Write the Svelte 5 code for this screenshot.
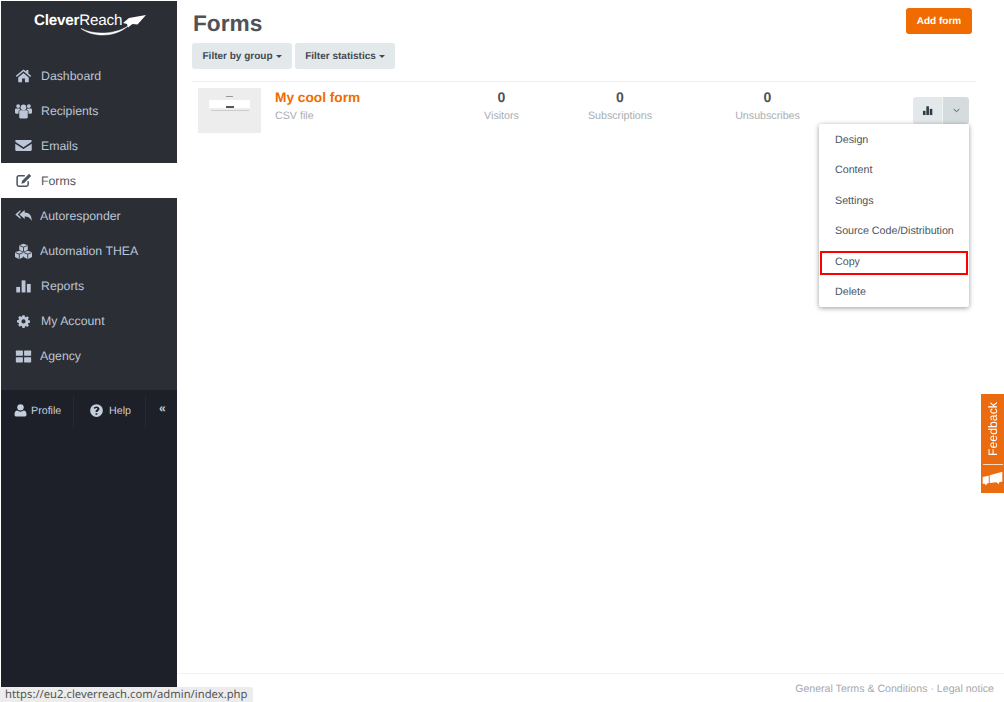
<script>
  const nav = [
    { label: 'Dashboard', icon: 'home' },
    { label: 'Recipients', icon: 'users' },
    { label: 'Emails', icon: 'mail' },
    { label: 'Forms', icon: 'edit', active: true },
    { label: 'Autoresponder', icon: 'replyall', tight: true },
    { label: 'Automation THEA', icon: 'cubes', tight: true },
    { label: 'Reports', icon: 'bars' },
    { label: 'My Account', icon: 'cog' },
    { label: 'Agency', icon: 'grid', tight: true }
  ];
  const stats = [
    { value: 0, label: 'Visitors', width: 119 },
    { value: 0, label: 'Subscriptions', width: 118 },
    { value: 0, label: 'Unsubscribes', width: 177 }
  ];
  const menu = ['Design', 'Content', 'Settings', 'Source Code/Distribution', 'Copy', 'Delete'];
</script>

{#snippet icon(name)}
  <svg class="icon" viewBox="0 0 20 20" aria-hidden="true">
    {#if name === 'home'}
      <path d="M10 2.800 1 10.400l1.100 1.300L10 5.100l7.900 6.600 1.100-1.300-3.300-2.800V3.400h-2.400v2z" />
      <path d="M3.800 12.400 10 7.200l6.200 5.200v5.400h-4.500v-4.200H8.300v4.200H3.800z" />
    {:else if name === 'users'}
      <circle cx="10" cy="6.200" r="3.400" />
      <circle cx="3.700" cy="4.800" r="2.300" />
      <circle cx="16.300" cy="4.800" r="2.300" />
      <path d="M5 11c0-1 .8-1.400 1.500-1.400h7c.7 0 1.500.4 1.500 1.400v7c0 .9-.7 1.400-1.500 1.400h-7c-.8 0-1.500-.5-1.500-1.400z" />
      <path d="M0 9c0-1 .6-1.500 1.400-1.500h4c.2.800.6 1.400 1.100 1.600-1.500.3-2.300 1-2.300 2v2.600H1.400c-.8 0-1.400-.5-1.400-1.300zM20 9c0-1-.6-1.500-1.400-1.500h-4c-.2.800-.6 1.400-1.100 1.600 1.500.3 2.300 1 2.300 2v2.600h2.800c.8 0 1.400-.5 1.400-1.300z" />
    {:else if name === 'mail'}
      <path d="M1.600 3.600h16.800c.7 0 1.300.5 1.300 1.200 0 .6-.4 1.100-.9 1.500L10 12 1 6.300C.5 5.900.3 5.400.3 4.800c0-.7.6-1.200 1.300-1.200z" />
      <path d="M.3 7.800 10 14l9.700-6.200v7.300c0 .8-.6 1.300-1.300 1.300H1.600c-.7 0-1.300-.5-1.300-1.300z" />
    {:else if name === 'edit'}
      <path class="line" d="M15.500 11v3.700c0 1.200-.8 2-2 2H4.500c-1.200 0-2-.8-2-2V6.500c0-1.200.8-2 2-2h7" />
      <path d="M16.600 2.200 19 4.600l-8.200 8.200-3.300.9.900-3.300z" />
    {:else if name === 'replyall'}
      <path d="M6.400 3.400v2.200L3.100 8.700l3.300 3.100V14L.3 8.700z" />
      <path d="M11.400 3.400v3.200c4.800.2 8.300 2.600 8.300 10-1.700-3.800-4.200-5.300-8.300-5.300V14L5.200 8.700z" />
    {:else if name === 'cubes'}
      <path d="m10 .8 5 1.900v5.400L10 10.200 5 8.100V2.700z" />
      <path d="m5 9 5 2v5.600L5 19 0 16.600V11zM15 9l5 2v5.600L15 19l-5-2.400V11z" />
      <path class="cut" d="M5.300 3 10 4.900 14.700 3M.4 11.300 5 13.100l4.600-1.800M10.400 11.300 15 13.100l4.600-1.800M5 13.100V19M15 13.100V19M10 4.900v5.300" />
    {:else if name === 'bars'}
      <rect x="1.500" y="10.500" width="4.500" height="6.500" />
      <rect x="7.800" y="2.800" width="4.500" height="14.200" />
      <rect x="14" y="7" width="4.500" height="10" />
    {:else if name === 'cog'}
      <g transform="translate(1.800 1.700) scale(0.82)">
        <path fill-rule="evenodd" d="M8.400 1h3.200l.4 2.300 1.500.6 1.900-1.300 2.300 2.300-1.300 1.900.6 1.500 2.300.4v3.200l-2.300.4-.6 1.500 1.300 1.900-2.300 2.300-1.900-1.300-1.500.6-.4 2.300H8.400L8 16.800l-1.500-.6-1.900 1.300-2.300-2.300 1.300-1.900-.6-1.500-2.300-.4V8.200L3 7.800l.6-1.500-1.300-1.900 2.300-2.300 1.900 1.300L8 2.800zM10 7a3 3 0 1 0 0 6 3 3 0 0 0 0-6z" />
      </g>
    {:else if name === 'grid'}
      <rect x="1" y="3" width="8.300" height="6.200" rx="0.800" />
      <rect x="10.700" y="3" width="8.300" height="6.200" rx="0.800" />
      <rect x="1" y="10.800" width="8.300" height="6.200" rx="0.800" />
      <rect x="10.700" y="10.800" width="8.300" height="6.200" rx="0.800" />
    {:else if name === 'user'}
      <circle cx="10" cy="5.800" r="4.300" />
      <path d="M2 15.300c0-3.500 1.500-5.300 3.800-5.300 1.200 1 2.600 1.500 4.200 1.500s3-.5 4.200-1.500c2.300 0 3.800 1.800 3.800 5.300 0 1.800-1.100 2.700-2.700 2.700H4.700C3.100 18 2 17.100 2 15.300z" />
    {:else if name === 'help'}
      <path fill-rule="evenodd" d="M10 1.500a8.500 8.500 0 1 1 0 17 8.500 8.500 0 0 1 0-17zM8.700 13.500v2.200h2.500v-2.200zM10 4.500c-2 0-3.300 1-3.900 2.300l1.700 1.200c.5-.8 1-1.300 2-1.300.8 0 1.400.4 1.400 1.100 0 .6-.4.900-1.100 1.300-.9.500-1.400 1.200-1.400 2.200v.8h2.500v-.5c0-.5.300-.7 1-1.100.9-.5 1.700-1.300 1.700-2.800 0-2-1.900-3.200-3.900-3.200z" />
    {/if}
  </svg>
{/snippet}

<div class="page">
  <aside class="sidebar">
    <div class="logo">
      <span class="logo__text"><b>Clever</b>Reach</span>
      <svg class="logo__mark" viewBox="0 0 112 30" aria-hidden="true">
        <path d="M47 17.500C60 24 80 24 94 15 82 26 60 27 47 17.500z" fill="#fff" stroke="#fff" stroke-width="0.500" />
        <path d="M112 4 95 7l-6 5 4 1 1 3.500 4.500-3.500 5 .5z" fill="#fff" />
      </svg>
    </div>
    <nav class="nav">
      {#each nav as item (item.label)}
        <a class="nav__item" class:nav__item--active={item.active} class:nav__item--tight={item.tight} href="#top">
          {@render icon(item.icon)}
          <span>{item.label}</span>
        </a>
      {/each}
    </nav>
    <div class="account">
      <a class="account__link account__link--profile" href="#top">{@render icon('user')}<span>Profile</span></a>
      <a class="account__link account__link--help" href="#top">{@render icon('help')}<span>Help</span></a>
      <a class="account__link account__link--collapse" href="#top">«</a>
    </div>
  </aside>

  <main class="main">
    <div class="content">
      <header class="head">
        <div>
          <h1>Forms</h1>
          <div class="filters">
            <button class="btn">Filter by group <i class="caret"></i></button>
            <button class="btn">Filter statistics <i class="caret"></i></button>
          </div>
        </div>
        <button class="add">Add form</button>
      </header>

      <section class="row">
        <div class="thumb">
          <div class="thumb__title"></div>
          <div class="thumb__card"><div class="thumb__submit"></div></div>
          <div class="thumb__foot"></div>
        </div>
        <div class="info">
          <a href="#top">My cool form</a>
          <span>CSV file</span>
        </div>
        <div class="stats">
          {#each stats as stat (stat.label)}
            <div class="stat" style={`width: ${stat.width}px`}>
              <strong>{stat.value}</strong>
              <span>{stat.label}</span>
            </div>
          {/each}
        </div>
        <div class="actions">
          <button class="actions__chart" aria-label="Statistics">
            <svg viewBox="0 0 20 20" aria-hidden="true">
              <rect x="3" y="10.500" width="4" height="6.500" />
              <rect x="8.200" y="3.500" width="4" height="13.500" />
              <rect x="13.400" y="7.500" width="4" height="9.500" />
            </svg>
          </button>
          <button class="actions__more" aria-label="More">
            <svg viewBox="0 0 10 6" aria-hidden="true"><path d="M1 1l4 3.600L9 1" /></svg>
          </button>
          <ul class="menu">
            {#each menu as entry (entry)}
              <li class:menu__picked={entry === 'Copy'}>{entry}</li>
            {/each}
          </ul>
        </div>
      </section>
    </div>

    <footer class="footer">General Terms &amp; Conditions · Legal notice</footer>
  </main>

  <a class="feedback" href="#top">
    <span>Feedback</span>
    <svg viewBox="0 0 22 16" aria-hidden="true">
      <path d="M8 4.500 21.500.8v10.500l-3.500.7V14l-3-2-7 .8z" />
      <path d="M.5 6.500 7 5v8l-1.800.4L4 15.500l-1.300-2H.5z" />
    </svg>
  </a>

  <div class="status">https://eu2.cleverreach.com/admin/index.php</div>
</div>

<style>
  :global(body) {
    margin: 0;
    background: #fff;
    font-family: 'Liberation Sans', Arial, sans-serif;
    text-rendering: geometricPrecision;
  }

  .page {
    position: relative;
    display: flex;
    height: 702px;
    overflow: hidden;
    background: #fff;
  }

  a {
    text-decoration: none;
  }

  button {
    border: 0;
    font-family: inherit;
    text-rendering: inherit;
    cursor: pointer;
  }

  .sidebar {
    display: flex;
    flex: 0 0 176px;
    flex-direction: column;
    height: 687px;
    margin: 1px 0 0 1px;
    background: #1d2028;
  }

  .logo {
    position: relative;
    height: 57px;
    background: #2b2e35;
  }

  .logo__text {
    position: absolute;
    top: 11px;
    left: 33px;
    color: #fff;
    font-size: 15.2px;
    letter-spacing: -0.2px;
  }

  .logo__mark {
    position: absolute;
    top: 10px;
    left: 33px;
    width: 112px;
    height: 30px;
  }

  .nav {
    display: flex;
    flex-direction: column;
    padding-bottom: 16px;
    background: #2b2e35;
  }

  .nav__item {
    display: flex;
    align-items: center;
    gap: 9px;
    height: 35.1px;
    padding-left: 14px;
    color: #bcc6d6;
    font-size: 12.3px;
  }

  .nav__item--tight {
    gap: 8px;
  }

  .nav__item--active {
    background: #fff;
    color: #4c5560;
  }

  .icon {
    flex: 0 0 17px;
    width: 17px;
    height: 17px;
    fill: currentColor;
  }

  .icon .line {
    fill: none;
    stroke: currentColor;
    stroke-width: 1.8;
  }

  .icon .cut {
    fill: none;
    stroke: #2b2e35;
    stroke-width: 1;
  }

  .account {
    display: flex;
    align-items: center;
    height: 42px;
    color: #c5cedb;
    font-size: 10.7px;
  }

  .account__link {
    display: flex;
    align-items: center;
    gap: 3px;
    height: 32px;
    color: inherit;
    border-right: 1px solid #262a32;
  }

  .account__link .icon {
    flex-basis: 15px;
    width: 15px;
    height: 15px;
  }

  .account__link--profile {
    width: 60px;
    padding-left: 12px;
  }

  .account__link--help {
    gap: 5px;
    width: 56px;
    padding-left: 15px;
  }

  .account__link--collapse {
    padding: 0 0 6px 13px;
    border: 0;
    font-size: 12px;
    font-weight: 700;
  }

  .main {
    display: flex;
    flex: 1;
    flex-direction: column;
    min-width: 0;
  }

  .content {
    flex: 1;
    padding: 8px 28px 0 15px;
  }

  .head {
    display: flex;
    align-items: flex-start;
    justify-content: space-between;
    height: 73px;
    padding-right: 4px;
    border-bottom: 1px solid #eeeeee;
  }

  h1 {
    margin: 0 0 7px 1px;
    padding-top: 2px;
    color: #4f5257;
    font-size: 22.7px;
    line-height: 26px;
    font-weight: 700;
  }

  .filters {
    display: flex;
    gap: 3px;
  }

  .btn {
    display: flex;
    align-items: center;
    justify-content: center;
    gap: 3px;
    width: 100px;
    height: 26px;
    padding: 0;
    border-radius: 3px;
    background: #e3e9ea;
    color: #434a54;
    font-size: 10px;
    font-weight: 700;
  }

  .caret {
    border-top: 3px solid #434a54;
    border-right: 3px solid transparent;
    border-left: 3px solid transparent;
  }

  .add {
    width: 66px;
    height: 26px;
    padding: 0;
    border-radius: 3px;
    background: #f06c00;
    color: #fff;
    font-size: 10px;
    font-weight: 700;
  }

  .row {
    display: flex;
    align-items: flex-start;
    padding: 6px 0 0 6px;
  }

  .thumb {
    display: flex;
    flex: 0 0 63px;
    flex-direction: column;
    align-items: center;
    height: 45px;
    background: #ededed;
  }

  .thumb__title {
    width: 7px;
    height: 1px;
    margin-top: 8px;
    background: #999;
    filter: blur(0.5px);
  }

  .thumb__card {
    display: flex;
    justify-content: center;
    align-items: flex-end;
    width: 41px;
    height: 8px;
    margin-top: 3px;
    background: #fff;
    filter: blur(0.5px);
  }

  .thumb__submit {
    width: 8px;
    height: 2px;
    background: #555;
  }

  .thumb__foot {
    width: 38px;
    height: 1px;
    margin-top: 2px;
    background: #ccc;
    filter: blur(0.5px);
  }

  .info {
    display: flex;
    flex: 0 0 167px;
    flex-direction: column;
    gap: 2px;
    padding-left: 14px;
    box-sizing: border-box;
  }

  .info a {
    color: #f06c00;
    font-size: 13.7px;
    font-weight: 700;
    line-height: 19px;
  }

  .info span {
    color: #a9adb2;
    font-size: 10.7px;
    line-height: 14px;
  }

  .stats {
    display: flex;
    flex: 1;
    margin-left: 14px;
  }

  .stat {
    display: flex;
    flex-direction: column;
    align-items: center;
    gap: 3px;
  }

  .stat strong {
    color: #4f5257;
    font-size: 14px;
    line-height: 19px;
  }

  .stat span {
    color: #a9adb2;
    font-size: 10.7px;
    line-height: 13px;
  }

  .actions {
    position: relative;
    display: flex;
    flex: 0 0 56px;
    height: 27px;
    margin: 9px 7px 0 0;
  }

  .actions button {
    display: flex;
    align-items: center;
    justify-content: center;
    padding: 0;
  }

  .actions__chart {
    width: 30px;
    border-radius: 3px 0 0 3px;
    background: #e3e9ea;
    border-right: 1px solid #f3f5f5 !important;
  }

  .actions__chart svg {
    width: 13px;
    height: 13px;
    fill: #333a42;
  }

  .actions__more {
    width: 26px;
    border-radius: 0 3px 3px 0;
    background: #d4dcdd;
  }

  .actions__more svg {
    width: 7px;
    height: 5px;
    fill: none;
    stroke: #4a525a;
    stroke-width: 1.4;
  }

  .menu {
    position: absolute;
    top: 27px;
    right: 0;
    width: 150px;
    height: 183px;
    margin: 0;
    padding: 1px 0 0;
    list-style: none;
    border-radius: 2px;
    background: #fff;
    box-shadow: 0 1px 5px rgba(0, 0, 0, 0.4);
    box-sizing: border-box;
  }

  .menu li {
    height: 30.4px;
    padding-left: 16px;
    color: #4c5560;
    font-size: 10.7px;
    line-height: 30.4px;
    box-sizing: border-box;
  }

  .menu .menu__picked {
    position: relative;
  }

  .menu .menu__picked::after {
    position: absolute;
    top: 4px;
    left: 1px;
    width: 148px;
    height: 24px;
    border: 2px solid #f00;
    box-sizing: border-box;
    content: '';
  }

  .footer {
    height: 28px;
    padding-right: 10px;
    border-top: 1px solid #f2f2f2;
    color: #a7a9ac;
    font-size: 10.6px;
    line-height: 30px;
    text-align: right;
  }

  .feedback {
    position: absolute;
    top: 394px;
    right: 0;
    display: flex;
    flex-direction: column;
    align-items: center;
    width: 23px;
    height: 99px;
    background: #ea6b10;
    color: #fff;
  }

  .feedback span {
    display: block;
    width: 20px;
    height: 71px;
    padding-bottom: 8px;
    border-top: 1px solid #ffd9bd;
    box-sizing: border-box;
    writing-mode: vertical-rl;
    transform: rotate(180deg);
    transform-origin: center;
    font-size: 12.3px;
    line-height: 20px;
    text-align: right;
  }

  .feedback svg {
    width: 21px;
    height: 15px;
    margin-top: 6px;
    fill: #fff;
  }

  .status {
    position: absolute;
    bottom: 0;
    left: 0;
    width: 248px;
    height: 15px;
    padding-left: 5px;
    border-radius: 0 3px 0 0;
    background: #ececec;
    color: #555;
    font-family: 'Noto Sans', sans-serif;
    font-size: 11.25px;
    line-height: 15px;
  }
</style>
